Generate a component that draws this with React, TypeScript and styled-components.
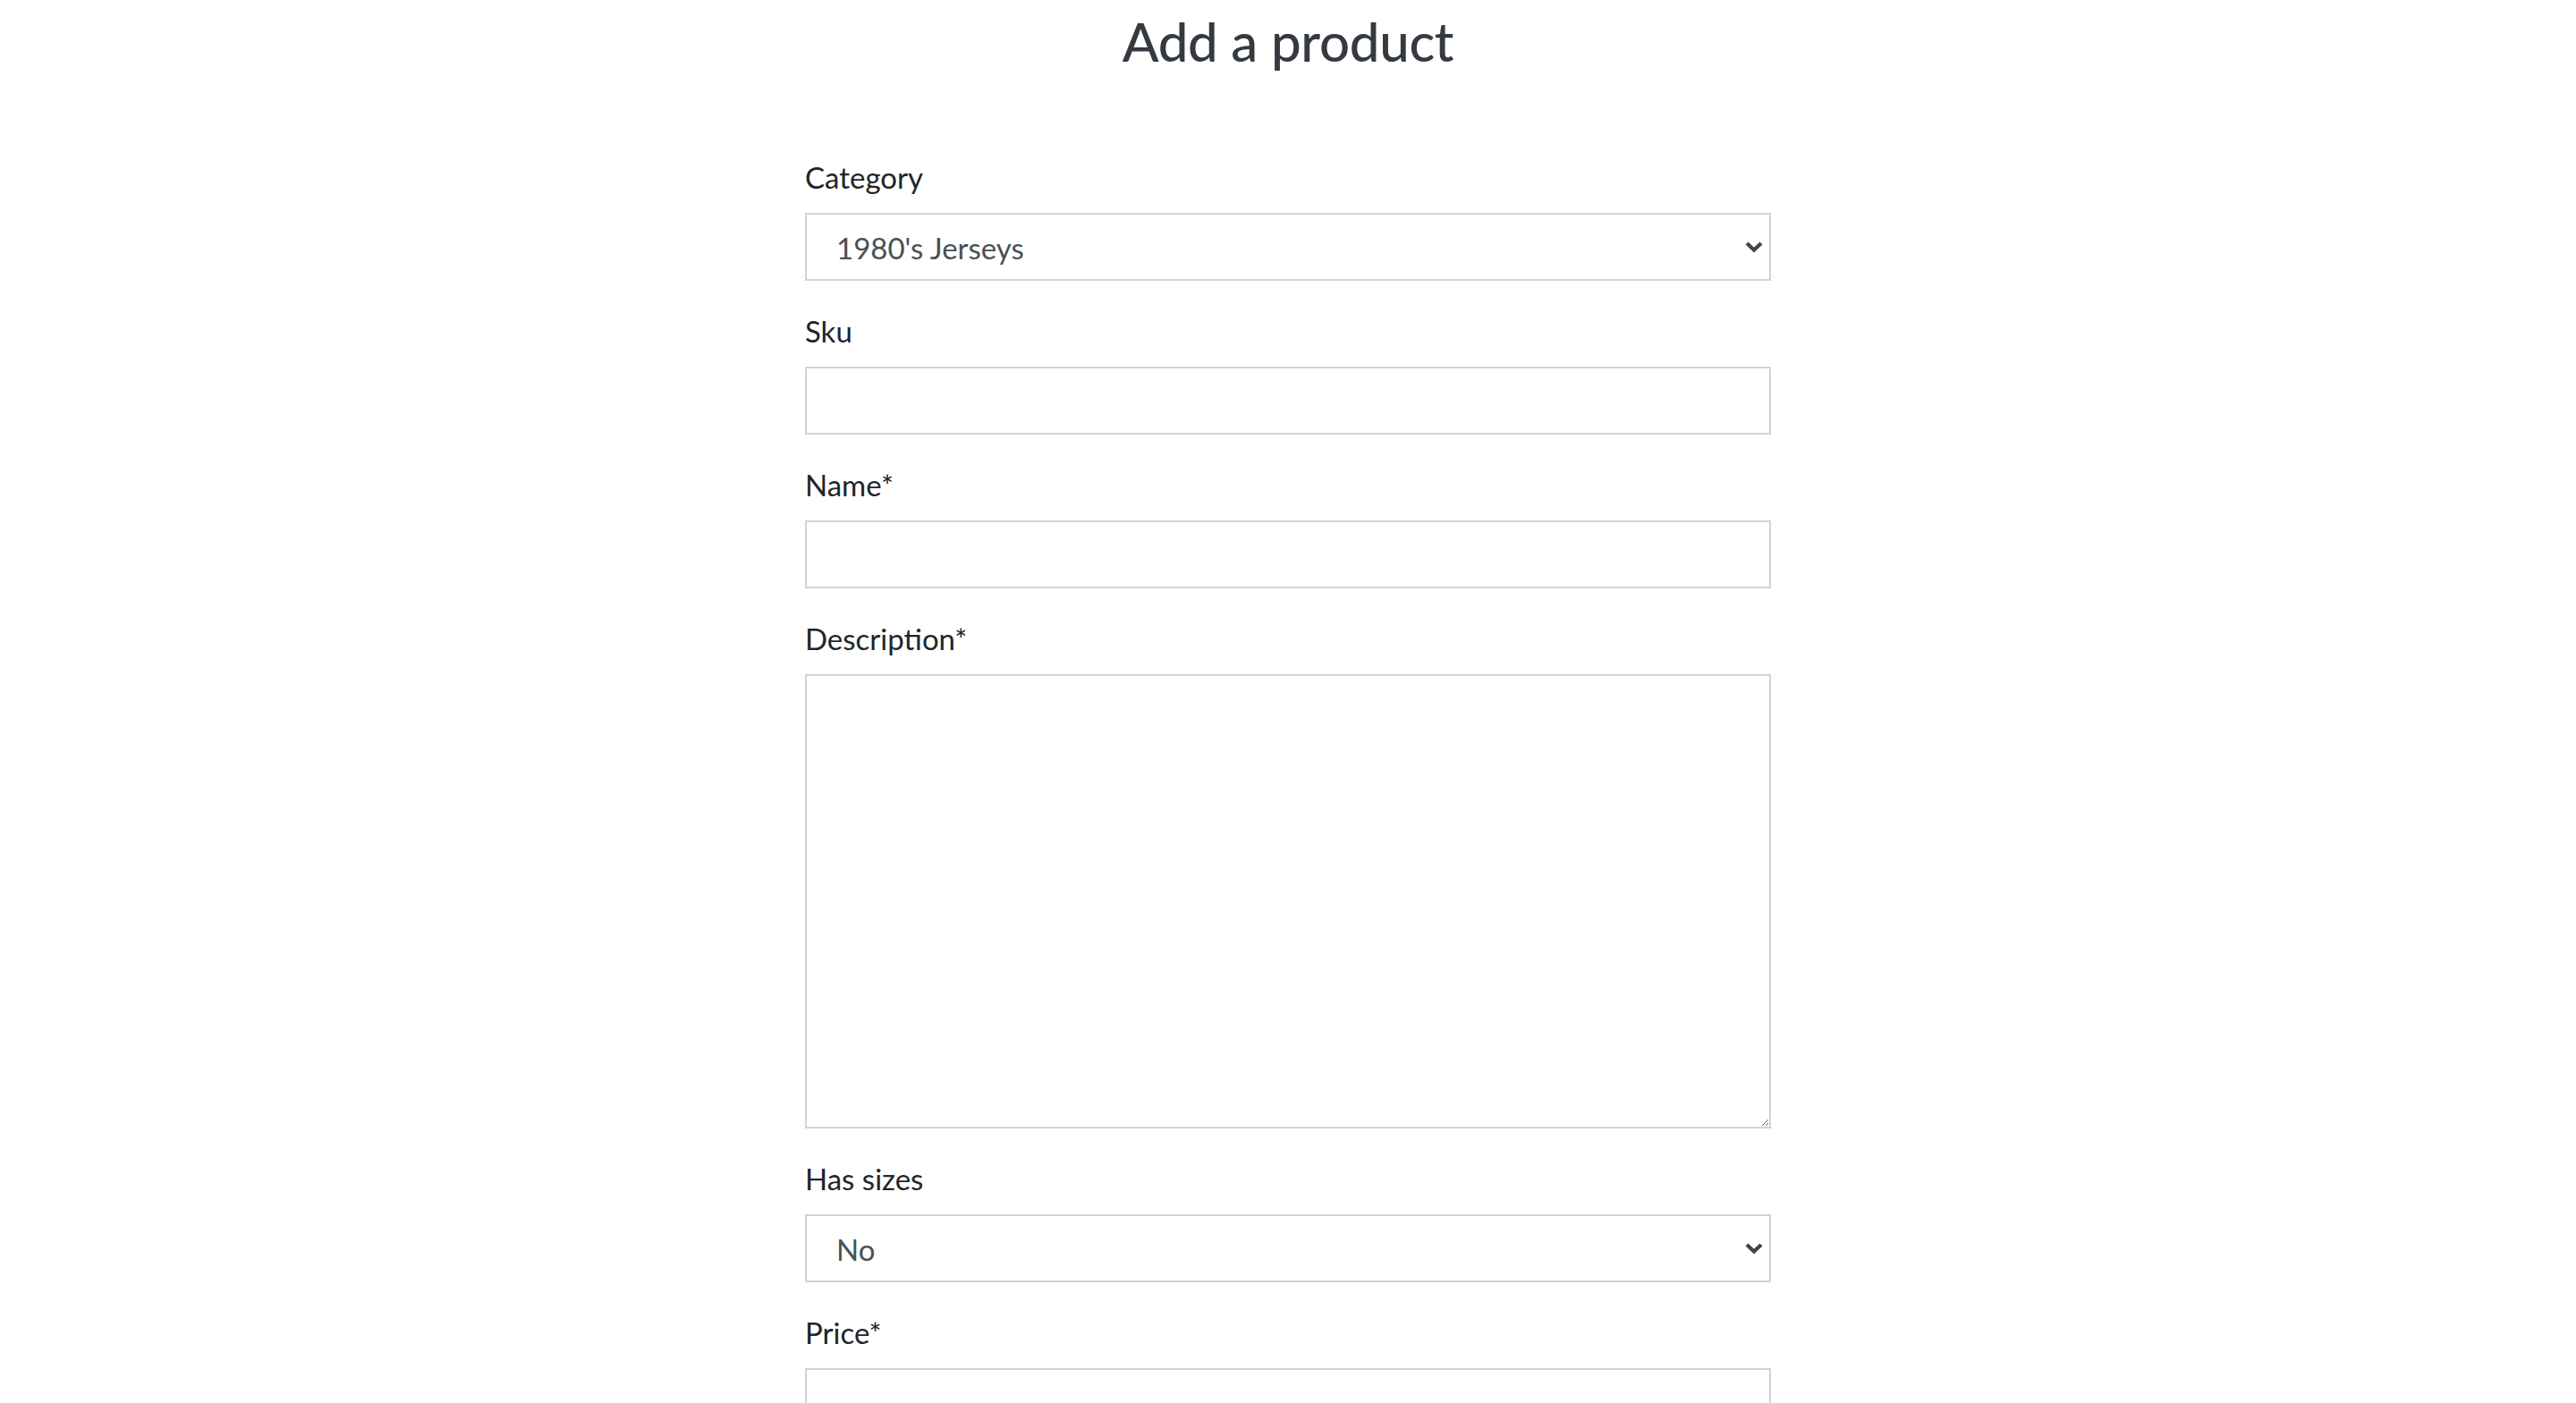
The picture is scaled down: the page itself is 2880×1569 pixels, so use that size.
import React from "react";
import styled, { createGlobalStyle } from "styled-components";

const GlobalStyle = createGlobalStyle`
  html, body {
    margin: 0;
    padding: 0;
    background: #ffffff;
  }
  body {
    font-family: Lato, "Noto Sans", "Liberation Sans", sans-serif;
    color: #212529;
  }
  * {
    box-sizing: border-box;
  }
`;

const Page = styled.main`
  display: flex;
  flex-direction: column;
  align-items: center;
`;

const Title = styled.h1`
  margin: 0;
  font-size: 60px;
  line-height: 92px;
  font-weight: 500;
  color: #343a40;
  letter-spacing: -0.3px;
`;

const Form = styled.form`
  width: 1080px;
  margin-top: 82px;
  display: flex;
  flex-direction: column;
  gap: 32px;
`;

const Group = styled.div`
  display: flex;
  flex-direction: column;
`;

const Label = styled.label`
  display: block;
  font-size: 33px;
  line-height: 48px;
  margin-bottom: 16px;
  color: #212529;
`;

const controlStyles = `
  width: 100%;
  border: 2px solid #ced4da;
  border-radius: 0;
  background: #ffffff;
  color: #495057;
  font-family: Lato, "Noto Sans", "Liberation Sans", sans-serif;
  font-size: 33px;
  outline: none;
`;

const Input = styled.input`
  ${controlStyles}
  height: 76px;
  padding: 0 24px;
`;

const TextArea = styled.textarea`
  ${controlStyles}
  height: 508px;
  padding: 12px 24px;
  line-height: 48px;
  resize: vertical;
`;

const SelectWrap = styled.div`
  position: relative;
`;

const Select = styled.select`
  ${controlStyles}
  height: 76px;
  padding: 2px 60px 0 33px;
  appearance: none;
  -webkit-appearance: none;
`;

const Chevron = styled.svg`
  position: absolute;
  right: 8px;
  top: 50%;
  width: 22px;
  height: 16px;
  margin-top: -8px;
  pointer-events: none;
`;

interface SelectProps {
  id: string;
  value: string;
  options: string[];
}

const SelectField: React.FC<SelectProps> = ({ id, value, options }) => (
  <SelectWrap>
    <Select id={id} defaultValue={value}>
      {options.map((o) => (
        <option key={o} value={o}>{o}</option>
      ))}
    </Select>
    <Chevron viewBox="0 0 22 16">
      <path d="M3 4 L11 11.5 L19 4" fill="none" stroke="#40454b" strokeWidth="4.2" strokeLinecap="butt" strokeLinejoin="miter" />
    </Chevron>
  </SelectWrap>
);

export default function App() {
  return (
    <Page>
      <GlobalStyle />
      <Title>Add a product</Title>
      <Form onSubmit={(e) => e.preventDefault()}>
        <Group>
          <Label htmlFor="category">Category</Label>
          <SelectField
            id="category"
            value="1980's Jerseys"
            options={["1980's Jerseys", "1990's Jerseys", "2000's Jerseys"]}
          />
        </Group>
        <Group>
          <Label htmlFor="sku">Sku</Label>
          <Input id="sku" type="text" />
        </Group>
        <Group>
          <Label htmlFor="name">Name*</Label>
          <Input id="name" type="text" />
        </Group>
        <Group>
          <Label htmlFor="description">Description*</Label>
          <TextArea id="description" rows={10} />
        </Group>
        <Group>
          <Label htmlFor="has_sizes">Has sizes</Label>
          <SelectField id="has_sizes" value="No" options={["No", "Yes"]} />
        </Group>
        <Group>
          <Label htmlFor="price">Price*</Label>
          <Input id="price" type="number" />
        </Group>
      </Form>
    </Page>
  );
}
